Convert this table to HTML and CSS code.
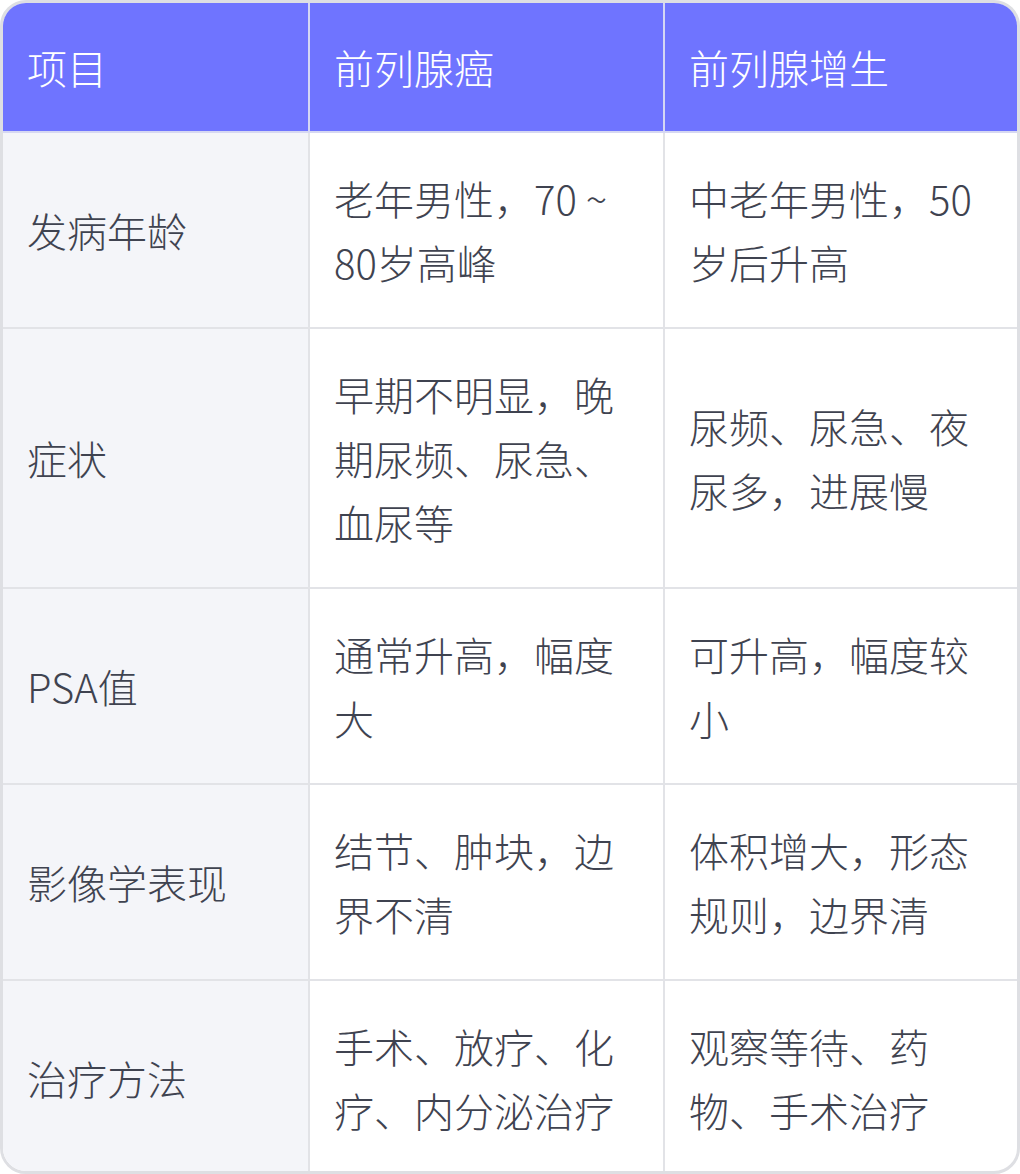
FILE: index.html
```html
<!DOCTYPE html>
<html lang="zh-CN">
<head>
<meta charset="utf-8">
<title>前列腺癌与前列腺增生对比</title>
<link rel="stylesheet" href="styles.css">
</head>
<body>
<div class="card">
  <table class="compare">
    <colgroup>
      <col class="c1">
      <col class="c2">
      <col class="c3">
    </colgroup>
    <thead>
      <tr>
        <th>项目</th>
        <th>前列腺癌</th>
        <th>前列腺增生</th>
      </tr>
    </thead>
    <tbody>
      <tr>
        <td class="label">发病年龄</td>
        <td>老年男性，70 ~ 80岁高峰</td>
        <td>中老年男性，50岁后升高</td>
      </tr>
      <tr>
        <td class="label">症状</td>
        <td>早期不明显，晚期尿频、尿急、血尿等</td>
        <td>尿频、尿急、夜尿多，进展慢</td>
      </tr>
      <tr>
        <td class="label">PSA值</td>
        <td>通常升高，幅度大</td>
        <td>可升高，幅度较小</td>
      </tr>
      <tr>
        <td class="label">影像学表现</td>
        <td>结节、肿块，边界不清</td>
        <td>体积增大，形态规则，边界清</td>
      </tr>
      <tr>
        <td class="label">治疗方法</td>
        <td>手术、放疗、化疗、内分泌治疗</td>
        <td>观察等待、药物、手术治疗</td>
      </tr>
    </tbody>
  </table>
</div>
</body>
</html>
```

FILE: styles.css
```css
html, body {
  margin: 0;
  padding: 0;
  background: #ffffff;
}

.card {
  width: 1020px;
  height: 1174px;
  box-sizing: border-box;
  border: 3px solid #dedfe3;
  border-radius: 26px;
  overflow: hidden;
  background: #ffffff;
}

.compare {
  width: 100%;
  height: 100%;
  border-collapse: separate;
  border-spacing: 0;
  table-layout: fixed;
  font-family: "Noto Sans CJK SC", "Noto Sans", sans-serif;
  font-size: 40px;
  font-weight: 300;
  line-height: 64px;
  color: #3f4350;
}

.c1 { width: 307px; }
.c2 { width: 355px; }
.c3 { width: auto; }

.compare th,
.compare td {
  padding: 33px 24px;
  text-align: left;
  vertical-align: middle;
  border-right: 2px solid #e2e3e7;
  border-bottom: 2px solid #e2e3e7;
}

.compare th {
  padding-top: 32px;
  padding-bottom: 32px;
}

.compare th:last-child,
.compare td:last-child {
  border-right: none;
}

.compare tbody tr:last-child td {
  border-bottom: none;
}

.compare th {
  background: #6f74ff;
  color: #ffffff;
  font-weight: 300;
  border-right-color: #d4d6f4;
  border-bottom-color: #d6d8f2;
}

.compare td.label {
  background: #f4f5f9;
}
```
